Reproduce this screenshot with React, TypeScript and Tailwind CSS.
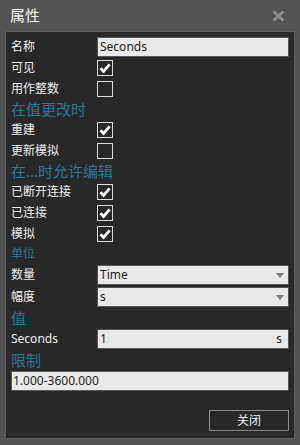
const Check = () => (
  <svg width="12" height="12" viewBox="0 0 12 12">
    <path d="M1.5 6.2 L4.6 9.4 L10.6 2.4" fill="none" stroke="#ffffff" strokeWidth="2.8" />
  </svg>
);

function CheckBox({ checked }: { checked: boolean }) {
  return (
    <div className="w-[16px] h-[16px] border border-[#dcdcdc] flex items-center justify-center">
      {checked && <Check />}
    </div>
  );
}

function Row({ label, children, h = "h-[21px]" }: { label: string; children: React.ReactNode; h?: string }) {
  return (
    <div className={`flex items-center ${h}`}>
      <div className="w-[86px] text-[12px] text-[#f0f0f0] leading-none">{label}</div>
      {children}
    </div>
  );
}

function CheckRow({ label, checked }: { label: string; checked: boolean }) {
  return (
    <Row label={label}>
      <CheckBox checked={checked} />
    </Row>
  );
}

function Select({ value }: { value: string }) {
  return (
    <div className="flex-1 h-[20px] bg-[#e9e9e9] border border-[#555555] flex items-center justify-between pl-[2px] pr-[4px] text-[12px] text-[#1e1e1e]">
      <span>{value}</span>
      <svg width="8" height="5" viewBox="0 0 8 5">
        <path d="M0 0 L8 0 L4 5 Z" fill="#7a7a7a" />
      </svg>
    </div>
  );
}

export default function App() {
  return (
    <div className="w-[300px] h-[445px] bg-[#545454] flex flex-col font-['Noto_Sans','Noto_Sans_CJK_SC',sans-serif]">
      {/* Title bar */}
      <div className="h-[31px] flex items-center justify-between pl-[10px] pr-[15px]">
        <span className="text-[15px] text-[#f2f2f2]">属性</span>
        <svg width="13" height="12" viewBox="0 0 13 12">
          <path d="M1.5 1.5 L11.5 10.5 M11.5 1.5 L1.5 10.5" stroke="#8c8c8c" strokeWidth="3" />
        </svg>
      </div>

      {/* Panel */}
      <div className="ml-[5px] w-[290px] h-[408px] border border-[#5f5f5f] bg-[#282828] flex flex-col px-[5px] pt-[4px]">
        <Row label="名称">
          <div className="flex-1 h-[20px] bg-[#e9e9e9] border border-[#555555] flex items-center pl-[2px] text-[12px] text-[#1e1e1e]">
            Seconds
          </div>
        </Row>
        <CheckRow label="可见" checked />
        <CheckRow label="用作整数" checked={false} />

        <div className="h-[20px] flex items-center text-[15px] text-[#2b7798]">在值更改时</div>
        <CheckRow label="重建" checked />
        <CheckRow label="更新模拟" checked={false} />

        <div className="h-[20px] flex items-center text-[15px] text-[#2b7798]">在...时允许编辑</div>
        <CheckRow label="已断开连接" checked />
        <CheckRow label="已连接" checked />
        <CheckRow label="模拟" checked />

        <div className="h-[20px] flex items-center text-[12px] text-[#2b7798]">单位</div>
        <Row label="数量" h="h-[22px]">
          <Select value="Time" />
        </Row>
        <Row label="幅度" h="h-[22px]">
          <Select value="s" />
        </Row>

        <div className="h-[20px] flex items-center text-[15px] text-[#2b7798]">值</div>
        <Row label="Seconds" h="h-[22px]">
          <div className="flex-1 h-[20px] bg-[#e9e9e9] border border-[#555555] flex items-center justify-between pl-[2px] pr-[6px] text-[12px] text-[#1e1e1e]">
            <span>1</span>
            <span>s</span>
          </div>
        </Row>

        <div className="h-[21px] flex items-center text-[15px] text-[#2b7798]">限制</div>
        <div className="h-[20px] bg-[#e9e9e9] border border-[#555555] flex items-center pl-[1px] text-[12px] text-[#1e1e1e]">
          1.000-3600.000
        </div>

        <div className="flex justify-end mt-[19px]">
          <div className="w-[80px] h-[21px] border border-[#8a8a8a] flex items-center justify-center text-[12px] text-[#f0f0f0]">
            关闭
          </div>
        </div>
      </div>
    </div>
  );
}
